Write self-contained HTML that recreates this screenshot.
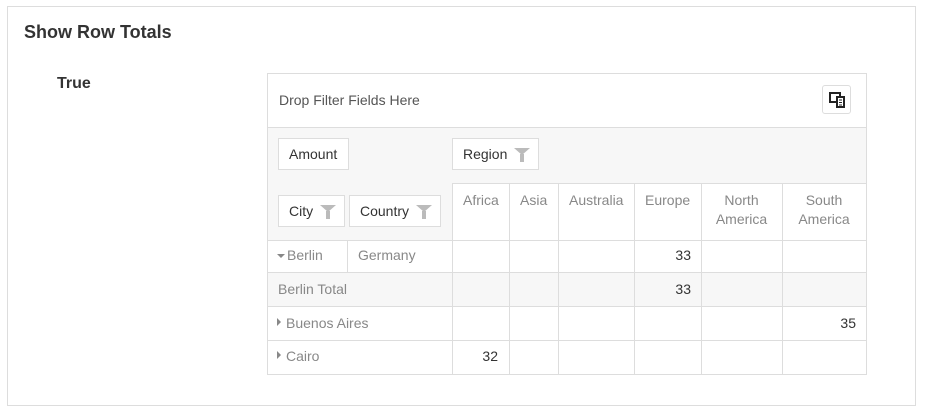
<!DOCTYPE html><html><head><style>
body{margin:0;width:927px;height:415px;background:#fff;font-family:"Liberation Sans",sans-serif;position:relative;overflow:hidden}
.a{position:absolute}
.t{font-size:14px;line-height:16px;white-space:nowrap}
.g{color:#888}.d{color:#333}
.h{position:absolute;height:1px;background:#ddd}
.v{position:absolute;width:1px;background:#ddd}
.btn{position:absolute;border:1px solid #ddd;background:#fff;height:32px;box-sizing:border-box;font-size:14px;color:#333;line-height:31px;padding-left:10px}
.f{position:absolute;top:9px;width:0;height:0;border-left:8px solid transparent;border-right:8px solid transparent;border-top:7px solid #bbb}
.f:after{content:"";position:absolute;left:-2px;top:-1px;width:4px;height:8px;background:#bbb}
.tri{display:inline-block;width:0;height:0;margin-right:4px;vertical-align:2px}
</style></head><body>
<div class="a" style="left:7px;top:6px;width:907px;height:398px;border:1px solid #ddd"></div>
<div class="a" style="left:24px;top:22px;font-size:18px;font-weight:bold;color:#333">Show Row Totals</div>
<div class="a" style="left:57px;top:75px;font-size:16px;font-weight:bold;color:#333">True</div>

<div class="a" style="left:268px;top:128px;width:598px;height:112px;background:#f7f7f7"></div>
<div class="a" style="left:268px;top:273px;width:598px;height:33px;background:#f7f7f7"></div>
<div class="a" style="left:452px;top:184px;width:414px;height:56px;background:#fff"></div>
<div class="h" style="left:267px;top:73px;width:600px"></div>
<div class="v" style="left:267px;top:73px;height:302px"></div>
<div class="v" style="left:866px;top:73px;height:302px"></div>
<div class="h" style="left:267px;top:127px;width:599px"></div>
<div class="h" style="left:452px;top:183px;width:414px"></div>
<div class="h" style="left:267px;top:240px;width:599px"></div>
<div class="h" style="left:267px;top:272px;width:599px"></div>
<div class="h" style="left:267px;top:306px;width:599px"></div>
<div class="h" style="left:267px;top:340px;width:599px"></div>
<div class="h" style="left:267px;top:374px;width:600px"></div>
<div class="v" style="left:452px;top:183px;height:191px"></div>
<div class="v" style="left:509px;top:183px;height:191px"></div>
<div class="v" style="left:558px;top:183px;height:191px"></div>
<div class="v" style="left:634px;top:183px;height:191px"></div>
<div class="v" style="left:701px;top:183px;height:191px"></div>
<div class="v" style="left:782px;top:183px;height:191px"></div>
<div class="v" style="left:347px;top:240px;height:32px"></div>

<div class="a t" style="left:279px;top:92px;color:#555">Drop Filter Fields Here</div>
<div class="a" style="left:822px;top:85px;width:29px;height:29px;border:1px solid #ddd;border-radius:3px;box-sizing:border-box"></div>
<svg class="a" style="left:828px;top:91px" width="18" height="18" viewBox="0 0 18 18"><rect x="2" y="2" width="10" height="9" fill="none" stroke="#222" stroke-width="2"/><rect x="9" y="6" width="7" height="10" fill="#fff" stroke="#222" stroke-width="2"/><path d="M11 9h3M11 11.5h3M11 14h3" stroke="#222"/></svg>

<div class="btn" style="left:278px;top:138px;width:71px">Amount</div>
<div class="btn" style="left:452px;top:138px;width:87px">Region<span class="f" style="left:61px"></span></div>
<div class="btn" style="left:278px;top:195px;width:67px">City<span class="f" style="left:41px"></span></div>
<div class="btn" style="left:349px;top:195px;width:92px">Country<span class="f" style="left:66px"></span></div>

<div class="a t g" style="left:463px;top:192px">Africa</div>
<div class="a t g" style="left:520px;top:192px">Asia</div>
<div class="a t g" style="left:569px;top:192px">Australia</div>
<div class="a t g" style="left:645px;top:192px">Europe</div>
<div class="a t g" style="left:701px;top:191px;width:81px;text-align:center;line-height:19px;white-space:normal">North America</div>
<div class="a t g" style="left:782px;top:191px;width:84px;text-align:center;line-height:19px;white-space:normal">South America</div>

<div class="a t g" style="left:277px;top:247px"><span class="tri" style="border-left:4px solid transparent;border-right:4px solid transparent;border-top:4px solid #888;margin-right:2px"></span>Berlin</div>
<div class="a t g" style="left:358px;top:247px">Germany</div>
<div class="a t g" style="left:278px;top:281px">Berlin Total</div>
<div class="a t g" style="left:277px;top:315px"><span class="tri" style="border-top:4px solid transparent;border-bottom:4px solid transparent;border-left:4px solid #888;margin-right:5px"></span>Buenos Aires</div>
<div class="a t g" style="left:277px;top:348px"><span class="tri" style="border-top:4px solid transparent;border-bottom:4px solid transparent;border-left:4px solid #888;margin-right:5px"></span>Cairo</div>

<div class="a t d" style="left:634px;top:247px;width:57px;text-align:right">33</div>
<div class="a t d" style="left:634px;top:281px;width:57px;text-align:right">33</div>
<div class="a t d" style="left:782px;top:315px;width:74px;text-align:right">35</div>
<div class="a t d" style="left:452px;top:348px;width:46px;text-align:right">32</div>
</body></html>
